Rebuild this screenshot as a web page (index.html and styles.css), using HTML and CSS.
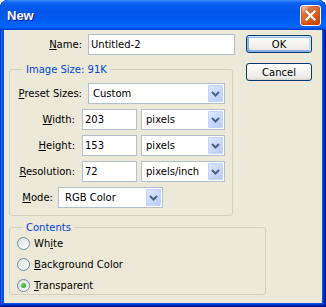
FILE: index.html
```html
<!DOCTYPE html>
<html>
<head>
<meta charset="utf-8">
<link rel="stylesheet" href="styles.css">
</head>
<body>
<div class="window">
  <div class="titlebar">
    <span class="title">New</span>
    <span class="close"><svg width="11" height="11" viewBox="0 0 11 11"><path d="M1.5 1.5 L9.5 9.5 M9.5 1.5 L1.5 9.5" stroke="#fff" stroke-width="2.2" stroke-linecap="square"/></svg></span>
  </div>
  <div class="client">
    <div class="top">
      <div class="left">
        <div class="row">
          <label class="lbl lbl-name"><u>N</u>ame:</label>
          <div class="textbox textbox-name">Untitled-2</div>
        </div>
        <fieldset class="group group-size">
          <legend>Image Size: 91K</legend>
          <div class="group-body size-body">
            <div class="row">
              <label class="lbl lbl-preset"><u>P</u>reset Sizes:</label>
              <div class="combo combo-preset"><span class="combo-value">Custom</span><span class="combo-btn"><svg width="9" height="6" viewBox="0 0 9 6"><path d="M1 1 L4.5 4.5 L8 1" fill="none" stroke="#4d6185" stroke-width="2"/></svg></span></div>
            </div>
            <div class="row">
              <label class="lbl lbl-dim"><u>W</u>idth:</label>
              <div class="textbox textbox-dim">203</div>
              <div class="combo combo-unit"><span class="combo-value">pixels</span><span class="combo-btn"><svg width="9" height="6" viewBox="0 0 9 6"><path d="M1 1 L4.5 4.5 L8 1" fill="none" stroke="#4d6185" stroke-width="2"/></svg></span></div>
            </div>
            <div class="row">
              <label class="lbl lbl-dim"><u>H</u>eight:</label>
              <div class="textbox textbox-dim">153</div>
              <div class="combo combo-unit"><span class="combo-value">pixels</span><span class="combo-btn"><svg width="9" height="6" viewBox="0 0 9 6"><path d="M1 1 L4.5 4.5 L8 1" fill="none" stroke="#4d6185" stroke-width="2"/></svg></span></div>
            </div>
            <div class="row">
              <label class="lbl lbl-dim"><u>R</u>esolution:</label>
              <div class="textbox textbox-dim">72</div>
              <div class="combo combo-unit"><span class="combo-value">pixels/inch</span><span class="combo-btn"><svg width="9" height="6" viewBox="0 0 9 6"><path d="M1 1 L4.5 4.5 L8 1" fill="none" stroke="#4d6185" stroke-width="2"/></svg></span></div>
            </div>
            <div class="row">
              <label class="lbl lbl-mode"><u>M</u>ode:</label>
              <div class="combo combo-mode"><span class="combo-value">RGB Color</span><span class="combo-btn"><svg width="9" height="6" viewBox="0 0 9 6"><path d="M1 1 L4.5 4.5 L8 1" fill="none" stroke="#4d6185" stroke-width="2"/></svg></span></div>
            </div>
          </div>
        </fieldset>
      </div>
      <div class="buttons">
        <button class="btn btn-default">OK</button>
        <button class="btn">Cancel</button>
      </div>
    </div>
    <fieldset class="group group-contents">
      <legend>Contents</legend>
      <div class="group-body contents-body">
        <div class="radio-row"><span class="radio"></span><span>Wh<u>i</u>te</span></div>
        <div class="radio-row"><span class="radio"></span><span><u>B</u>ackground Color</span></div>
        <div class="radio-row"><span class="radio checked"></span><span><u>T</u>ransparent</span></div>
      </div>
    </fieldset>
  </div>
</div>
</body>
</html>
```

FILE: styles.css
```css
body {
  margin: 0;
  background: #fff;
  font-family: "DejaVu Sans", sans-serif;
  font-size: 10px;
  color: #000;
}

.window {
  width: 326px;
  height: 307px;
  box-sizing: border-box;
  background: #0054e3;
  border-radius: 8px 8px 0 0;
  box-shadow: inset -1px -1px #00138c, inset 1px 1px #0831d9, inset -2px -2px #001ea0, inset 2px 2px #166aee, inset -3px -3px #003bda, inset 3px 3px #0855dd;
  display: flex;
  flex-direction: column;
  overflow: hidden;
}

.titlebar {
  height: 30px;
  flex: none;
  display: flex;
  align-items: center;
  justify-content: space-between;
  padding: 0 5px 0 7px;
  border-radius: 8px 8px 0 0;
  background: linear-gradient(180deg, #3d8ff9, #0a5ef0 10%, #0055ea 40%, #0062f8 85%, #0062f8 92%, #0050e0 95%, #003dd7 97%, #003dd7);
}

.title {
  color: #fff;
  font: bold 13px "Liberation Sans", sans-serif;
  text-shadow: 1px 1px #0f1089;
}

.close {
  width: 21px;
  height: 21px;
  box-sizing: border-box;
  border: 1px solid #fff;
  border-radius: 3px;
  background: radial-gradient(circle at 90% 90%, #cc4600 0, #dc6527 55%, #cd7546 70%, #ffccb2 90%, #fff 100%);
  box-shadow: inset 0 -1px 2px 1px #da4600;
  display: flex;
  align-items: center;
  justify-content: center;
}

.client {
  flex: 1;
  margin: 0 4px 4px;
  background: #ece9d8;
  padding-top: 4px;
  box-sizing: border-box;
}

.top {
  display: flex;
}

.left {
  width: 238px;
}

.buttons {
  margin-left: auto;
  margin-right: 10px;
  padding-top: 1px;
  display: flex;
  flex-direction: column;
  gap: 10px;
}

.btn {
  width: 66px;
  height: 18px;
  box-sizing: border-box;
  padding: 0;
  font: 10px "DejaVu Sans", sans-serif;
  color: #000;
  border: 1px solid #003c74;
  border-radius: 3px;
  background: linear-gradient(180deg, #fff, #ecebe6 86%, #d6d0c5);
}

.btn-default {
  box-shadow: inset -1px 1px #cee7ff, inset 1px 2px #98b8ea, inset -2px 2px #bcd4f6, inset 1px -1px #89ade4, inset 2px -2px #89ade4;
}

.row {
  display: flex;
  align-items: center;
  height: 21px;
}

.lbl {
  flex: none;
  text-align: right;
}

.lbl-name { width: 78px; margin-right: 6px; }
.lbl-preset { width: 72px; margin-right: 6px; }
.lbl-dim { width: 65px; margin-right: 7px; }
.lbl-mode { width: 43px; margin-right: 5px; }

.textbox {
  box-sizing: border-box;
  height: 21px;
  border: 1px solid #b2bfcd;
  background: #fff;
  padding-left: 2px;
  display: flex;
  align-items: center;
  flex: none;
}

.textbox-name { width: 147px; }
.textbox-dim { width: 55px; margin-right: 4px; }

.combo {
  box-sizing: border-box;
  height: 21px;
  border: 1px solid #b2bfcd;
  background: #fff;
  display: flex;
  align-items: center;
  flex: none;
}

.combo-preset { width: 137px; }
.combo-unit { width: 84px; }
.combo-mode { width: 105px; }

.combo-value {
  flex: 1;
  padding-left: 4px;
  white-space: nowrap;
  overflow: hidden;
}

.combo-mode .combo-value { padding-left: 6px; }

.combo-btn {
  width: 15px;
  height: 17px;
  margin-right: 1px;
  box-sizing: border-box;
  border: 1px solid #c3d3fd;
  border-radius: 1px;
  background: linear-gradient(135deg, #dde8fd, #b6cbf7);
  display: flex;
  align-items: center;
  justify-content: center;
}

.group {
  margin: 0;
  padding: 0;
  border: 1px solid #d0d0bf;
  border-radius: 3px;
  box-sizing: border-box;
  min-width: 0;
}

.group legend {
  color: #0046d5;
  padding: 0 3px;
  margin-left: 13px;
  line-height: 13px;
}

.group-size {
  margin: 8px 0 0 5px;
  width: 224px;
}

.size-body {
  padding: 7px 0;
  display: flex;
  flex-direction: column;
  gap: 5px;
}

.group-contents {
  margin: 5px 0 0 5px;
  width: 257px;
}

.contents-body {
  padding: 3px 0 2px 7px;
  display: flex;
  flex-direction: column;
  gap: 8px;
}

.radio-row {
  display: flex;
  align-items: center;
  gap: 4px;
  height: 13px;
}

.radio {
  width: 13px;
  height: 13px;
  box-sizing: border-box;
  border-radius: 50%;
  border: 1px solid #6f8aa6;
  background: linear-gradient(135deg, #dcdcd7, #fff);
  display: flex;
  align-items: center;
  justify-content: center;
  flex: none;
}

.radio.checked::after {
  content: "";
  width: 5px;
  height: 5px;
  border-radius: 50%;
  background: radial-gradient(circle at 35% 35%, #5ad85a, #21a121);
}
```
